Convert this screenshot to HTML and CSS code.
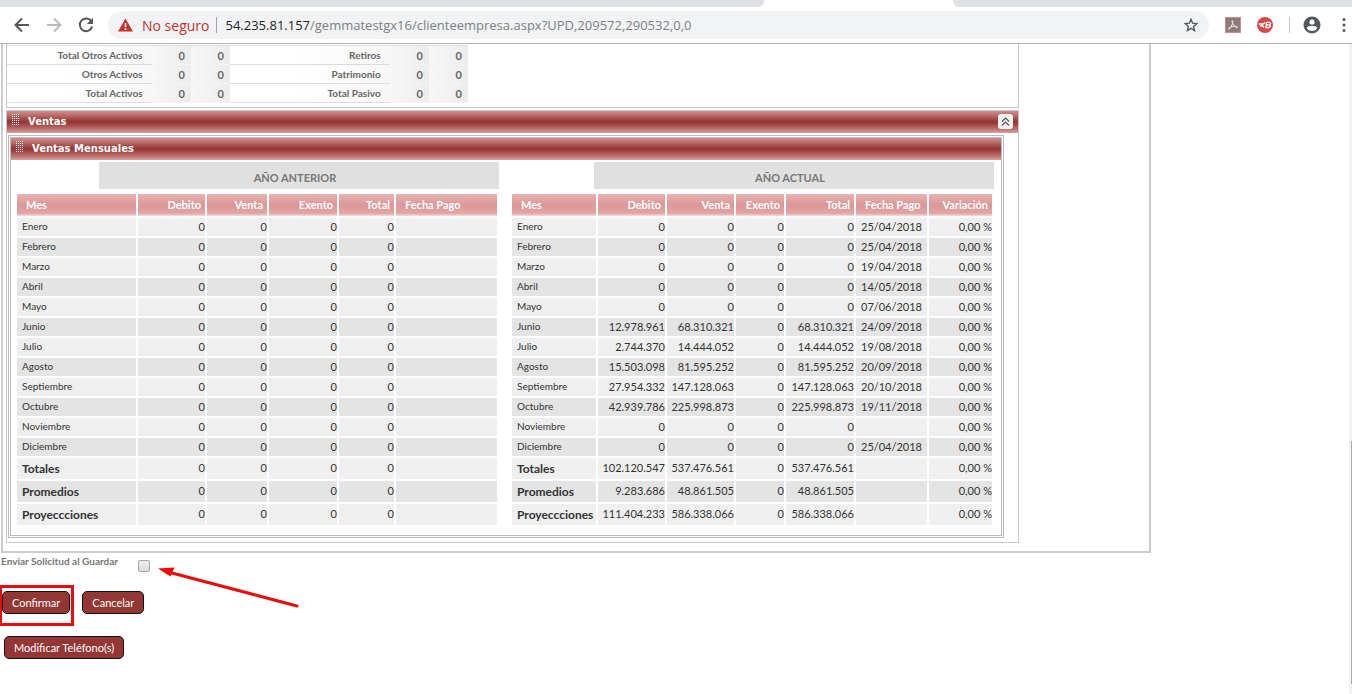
FILE: index.html
```html
<!DOCTYPE html>
<html lang="es">
<head>
<meta charset="utf-8">
<title>Cliente Empresa</title>
<link rel="stylesheet" href="styles.css">
</head>
<body>
<header class="browser">
  <div class="tabstrip"><span class="tab tab-before"></span><span class="tab tab-active"></span><span class="tab tab-after"></span></div>
  <div class="toolbar">
    <button class="nav" aria-label="Atrás"><svg width="16" height="16" viewBox="0 0 16 16"><path d="M15 8H2M8 1.500L1.500 8L8 14.500" fill="none" stroke="#55585c" stroke-width="2"/></svg></button>
    <button class="nav" aria-label="Adelante"><svg width="16" height="16" viewBox="0 0 16 16"><path d="M1 8h13M8 1.500L14.500 8L8 14.500" fill="none" stroke="#b9bbbe" stroke-width="2"/></svg></button>
    <button class="nav" aria-label="Recargar"><svg width="16" height="16" viewBox="0 0 16 16"><path d="M13.500 4.500A6.300 6.300 0 1 0 14.200 9.500" fill="none" stroke="#55585c" stroke-width="2"/><path d="M15 .8V7H8.800z" fill="#55585c"/></svg></button>
    <div class="omnibox">
      <svg width="15" height="14" viewBox="0 0 15 14"><path d="M7.500 .5L15 13.500H0z" fill="#c5332b"/><path d="M6.700 5h1.600v4H6.700zM6.700 10.300h1.600v1.600H6.700z" fill="#fff"/></svg>
      <span class="insecure">No seguro</span>
      <span class="bar"></span>
      <span class="url"><b>54.235.81.157</b>/gemmatestgx16/clienteempresa.aspx?UPD,209572,290532,0,0</span>
      <button class="star" aria-label="Favorito"><svg width="14" height="14" viewBox="0 0 14 14"><path d="M7 1.300l1.600 3.900 4.200.4-3.200 2.800 1 4.100L7 10.300l-3.600 2.200 1-4.100L1.200 5.600l4.200-.4z" fill="none" stroke="#55585c" stroke-width="1.400"/></svg></button>
    </div>
    <div class="extensions">
      <svg width="16" height="16" viewBox="0 0 16 16"><rect x=".5" y=".5" width="15" height="15" fill="#8b7c7b" stroke="#c98d86"/><path d="M7.300 3.500c1 0 .6 2.300-.4 4.500S4.300 12.700 3.400 12.300 5.200 9.800 8 9.300s4.800.4 4.500 1.200-3-.7-4.200-2.900S6.500 3.500 7.300 3.500z" fill="none" stroke="#f4eded" stroke-width=".9"/></svg>
      <svg width="16" height="16" viewBox="0 0 16 16"><circle cx="8" cy="8" r="8" fill="#dc4646"/><path d="M1.500 7h5M3 9h3.500M8 5.500L5 8l2 2.500M9.500 5.300h3.200l1 1-.8 1.500.5 1.400-1.200 1.300H8.800zM9.800 7.800h3" fill="none" stroke="#fff" stroke-width="1.300"/></svg>
      <span class="bar light"></span>
      <svg width="18" height="18" viewBox="0 0 18 18"><circle cx="9" cy="9" r="8.500" fill="#55585c"/><circle cx="9" cy="6" r="2.600" fill="#fff"/><path d="M3.800 12.300c0-3.300 10.400-3.300 10.400 0-1 1.600-2.900 2.700-5.200 2.700s-4.200-1.100-5.200-2.700z" fill="#fff"/></svg>
      <svg class="more" width="4" height="16" viewBox="0 0 4 16"><circle cx="2" cy="2.500" r="1.500" fill="#55585c"/><circle cx="2" cy="8" r="1.500" fill="#55585c"/><circle cx="2" cy="13.500" r="1.500" fill="#55585c"/></svg>
    </div>
  </div>
</header>
<div class="viewport">
<main class="page">
  <div class="frame">
    <div class="stack">
      <section class="box balance">
        <table class="totals">
          <colgroup><col class="w144"><col class="w39"><col class="w39"><col class="w159"><col class="w39"><col class="w39"></colgroup>
          <tbody>
          <tr><th>Total Otros Activos</th><td>0</td><td>0</td><th>Retiros</th><td>0</td><td>0</td></tr>
          <tr><th>Otros Activos</th><td>0</td><td>0</td><th>Patrimonio</th><td>0</td><td>0</td></tr>
          <tr><th>Total Activos</th><td>0</td><td>0</td><th>Total Pasivo</th><td>0</td><td>0</td></tr>
          </tbody>
        </table>
      </section>
      <section class="box">
        <h2 class="title"><span class="grip"></span>Ventas<button class="collapse" aria-label="Contraer"><svg width="9" height="9" viewBox="0 0 9 9"><path d="M1 4.500L4.500 1L8 4.500M1 8.500L4.500 5L8 8.500" fill="none" stroke="#555" stroke-width="1.200"/></svg></button></h2>
        <div class="inner">
          <h3 class="title"><span class="grip"></span>Ventas Mensuales</h3>
          <div class="years">
            <div class="year">
              <h4 class="band">AÑO ANTERIOR</h4>
              <table class="sales">
                <colgroup><col class="w119"><col class="w67"><col class="w60"><col class="w68"><col class="w55"><col class="w101"></colgroup>
                <thead><tr><th>Mes</th><th>Debito</th><th>Venta</th><th>Exento</th><th>Total</th><th class="date">Fecha Pago</th></tr></thead>
                <tbody>
                <tr><th>Enero</th><td>0</td><td>0</td><td>0</td><td>0</td><td></td></tr>
                <tr><th>Febrero</th><td>0</td><td>0</td><td>0</td><td>0</td><td></td></tr>
                <tr><th>Marzo</th><td>0</td><td>0</td><td>0</td><td>0</td><td></td></tr>
                <tr><th>Abril</th><td>0</td><td>0</td><td>0</td><td>0</td><td></td></tr>
                <tr><th>Mayo</th><td>0</td><td>0</td><td>0</td><td>0</td><td></td></tr>
                <tr><th>Junio</th><td>0</td><td>0</td><td>0</td><td>0</td><td></td></tr>
                <tr><th>Julio</th><td>0</td><td>0</td><td>0</td><td>0</td><td></td></tr>
                <tr><th>Agosto</th><td>0</td><td>0</td><td>0</td><td>0</td><td></td></tr>
                <tr><th>Septiembre</th><td>0</td><td>0</td><td>0</td><td>0</td><td></td></tr>
                <tr><th>Octubre</th><td>0</td><td>0</td><td>0</td><td>0</td><td></td></tr>
                <tr><th>Noviembre</th><td>0</td><td>0</td><td>0</td><td>0</td><td></td></tr>
                <tr><th>Diciembre</th><td>0</td><td>0</td><td>0</td><td>0</td><td></td></tr>
                <tr class="sum"><th>Totales</th><td>0</td><td>0</td><td>0</td><td>0</td><td></td></tr>
                <tr class="sum"><th>Promedios</th><td>0</td><td>0</td><td>0</td><td>0</td><td></td></tr>
                <tr class="sum"><th>Proyeccciones</th><td>0</td><td>0</td><td>0</td><td>0</td><td></td></tr>
                </tbody>
              </table>
            </div>
            <div class="year">
              <h4 class="band">AÑO ACTUAL</h4>
              <table class="sales">
                <colgroup><col class="w84"><col class="w67"><col class="w67"><col class="w48"><col class="w68"><col class="w71"><col class="w63"></colgroup>
                <thead><tr><th>Mes</th><th>Debito</th><th>Venta</th><th>Exento</th><th>Total</th><th class="date">Fecha Pago</th><th>Variación</th></tr></thead>
                <tbody>
                <tr><th>Enero</th><td>0</td><td>0</td><td>0</td><td>0</td><td class="date">25/04/2018</td><td>0,00 %</td></tr>
                <tr><th>Febrero</th><td>0</td><td>0</td><td>0</td><td>0</td><td class="date">25/04/2018</td><td>0,00 %</td></tr>
                <tr><th>Marzo</th><td>0</td><td>0</td><td>0</td><td>0</td><td class="date">19/04/2018</td><td>0,00 %</td></tr>
                <tr><th>Abril</th><td>0</td><td>0</td><td>0</td><td>0</td><td class="date">14/05/2018</td><td>0,00 %</td></tr>
                <tr><th>Mayo</th><td>0</td><td>0</td><td>0</td><td>0</td><td class="date">07/06/2018</td><td>0,00 %</td></tr>
                <tr><th>Junio</th><td>12.978.961</td><td>68.310.321</td><td>0</td><td>68.310.321</td><td class="date">24/09/2018</td><td>0,00 %</td></tr>
                <tr><th>Julio</th><td>2.744.370</td><td>14.444.052</td><td>0</td><td>14.444.052</td><td class="date">19/08/2018</td><td>0,00 %</td></tr>
                <tr><th>Agosto</th><td>15.503.098</td><td>81.595.252</td><td>0</td><td>81.595.252</td><td class="date">20/09/2018</td><td>0,00 %</td></tr>
                <tr><th>Septiembre</th><td>27.954.332</td><td>147.128.063</td><td>0</td><td>147.128.063</td><td class="date">20/10/2018</td><td>0,00 %</td></tr>
                <tr><th>Octubre</th><td>42.939.786</td><td>225.998.873</td><td>0</td><td>225.998.873</td><td class="date">19/11/2018</td><td>0,00 %</td></tr>
                <tr><th>Noviembre</th><td>0</td><td>0</td><td>0</td><td>0</td><td></td><td>0,00 %</td></tr>
                <tr><th>Diciembre</th><td>0</td><td>0</td><td>0</td><td>0</td><td class="date">25/04/2018</td><td>0,00 %</td></tr>
                <tr class="sum"><th>Totales</th><td>102.120.547</td><td>537.476.561</td><td>0</td><td>537.476.561</td><td></td><td>0,00 %</td></tr>
                <tr class="sum"><th>Promedios</th><td>9.283.686</td><td>48.861.505</td><td>0</td><td>48.861.505</td><td></td><td>0,00 %</td></tr>
                <tr class="sum"><th>Proyeccciones</th><td>111.404.233</td><td>586.338.066</td><td>0</td><td>586.338.066</td><td></td><td>0,00 %</td></tr>
                </tbody>
              </table>
            </div>
          </div>
        </div>
      </section>
    </div>
  </div>
  <form class="actions">
    <div class="send"><label for="enviar">Enviar Solicitud al Guardar</label><input type="checkbox" id="enviar"></div>
    <svg class="arrow" width="142" height="44" viewBox="0 0 142 44"><path d="M139 40L14 7" stroke="#e80c0c" stroke-width="3" stroke-linecap="round"/><path d="M0 2.500L16.500 1.500L12.500 10.500z" fill="#f00"/></svg>
    <div class="buttons"><span class="marked"><button type="button" class="btn">Confirmar</button></span><button type="button" class="btn">Cancelar</button></div>
    <div class="phones"><button type="button" class="btn">Modificar Teléfono(s)</button></div>
  </form>
</main>
<div class="scrollbar"><span class="thumb"></span></div>
</div>
</body>
</html>
```

FILE: styles.css
```css
* { box-sizing: border-box; }
body {
  margin: 0;
  height: 100vh;
  display: flex;
  flex-direction: column;
  overflow: hidden;
  background: #fff;
  font-family: Lato, "Open Sans", sans-serif;
  font-size: 11px;
  color: #333;
}
button { font: inherit; margin: 0; padding: 0; border: 0; background: none; }
svg { display: block; flex: none; }
h2, h3, h4 { margin: 0; }

/* Browser chrome */
.browser { flex: none; border-bottom: 1px solid #b0b3b2; }
.tabstrip { display: flex; height: 7px; background: #fff; }
.tab { background: #dee1e6; }
.tab-before { flex: 752; border-radius: 0 0 6px 0; }
.tab-before { flex: 764; }
.tab-active { flex: 189; background: #fff; }
.tab-after { flex: 399; border-radius: 0 0 0 6px; }
.toolbar { display: flex; align-items: center; height: 36px; padding: 0 6px 0 14px; }
.nav { width: 16px; height: 16px; margin-right: 16px; flex: none; }
.omnibox {
  flex: 1;
  display: flex;
  align-items: center;
  height: 28px;
  margin-left: -2px;
  padding: 0 11px 0 10px;
  border-radius: 14px;
  background: #f1f3f4;
  font-family: "Open Sans", sans-serif;
  font-size: 13px;
  white-space: nowrap;
}
.insecure { margin-left: 9px; font-size: 14px; color: #c5332b; }
.bar { flex: none; width: 1px; height: 16px; margin: 0 8px 0 7px; background: #a0a3a7; }
.light { margin: 0 -3px 0 0; background: #c4c6ca; }
.url { flex: 1; color: #7c8085; }
.url b { font-weight: 400; color: #222; }
.extensions { display: flex; align-items: center; gap: 16px; margin-left: 16px; }
.more { margin-left: 5px; }

/* Scrolled page */
.viewport { flex: 1; display: flex; min-height: 0; }
.page { flex: 1; min-width: 0; overflow: hidden; }
.scrollbar { width: 3px; background: #f1f1f1; display: flex; flex-direction: column; align-items: flex-end; justify-content: flex-end; padding-bottom: 10px; }
.thumb { width: 1px; height: 38%; background: #aaa; }
.frame { width: 1150px; max-width: 100%; margin-left: 1px; padding: 0 0 8px 3px; border: 2px solid #ccc; border-top: 0; }
.stack { display: flex; flex-direction: column; gap: 2px; width: fit-content; }
.box { border: 1px solid #c9c9c9; padding-bottom: 4px; }
.balance { border-top: 0; padding-top: 1px; }

.totals { table-layout: fixed; width: 461px; border-collapse: collapse; border-top: 1px solid #ddd; color: #666; font-weight: 700; }
.totals tr { height: 19px; }
.totals th, .totals td { padding: 0 6px 0 0; text-align: right; border-bottom: 1px solid #dcdcdc; }
.totals th { padding-right: 9px; font-size: 10px; background: linear-gradient(90deg, #fff 40%, #f7f7f7); }
.totals td { border-bottom-color: #f4f4f4; background: linear-gradient(90deg, #f7f7f7, #ececec); }

.title {
  display: flex;
  align-items: center;
  height: 22px;
  padding: 0 5px 2px 4px;
  background: linear-gradient(#cf8f8f, #be6e6e 18%, #933636 48%, #a04343 60%, #c77f7f 88%, #d9a3a3);
  color: #fff;
  font-family: "DejaVu Sans", sans-serif;
  font-size: 10px;
  font-weight: 700;
}
.grip {
  width: 8px;
  height: 12px;
  margin: 0 9px 2px 0;
  background: conic-gradient(#eee 25%, transparent 0) 0 0 / 2px 2px;
}
.collapse { display: grid; place-items: center; width: 15px; height: 15px; margin-left: auto; border-radius: 3px; background: #f2f2f2; }
.inner { margin: 2px 14px 0 1px; border: 3px double #bbb; }
.years { display: flex; gap: 11px; padding: 2px 7px 8px 4px; }
.band { height: 27px; margin: 0 0 3px 84px; padding: 3px 8px 0 0; background: #e0e0e0; color: #777; font-size: 11px; line-height: 26px; text-align: center; }

.sales { width: 484px; table-layout: fixed; border-spacing: 2px; font-size: 11px; line-height: 16px; white-space: nowrap; }
.sales th, .sales td { padding: 0; height: 18px; text-align: right; }
.sales th:first-child { text-align: left; }
.sales tbody th, .sales tbody td { background: #efefef; }
.sales tbody tr:nth-child(even) > * { background: #e4e4e4; }
.sales tbody th { padding: 0 0 2px 5px; font-size: 10px; font-weight: 400; }
.sales thead th { height: 22px; padding: 0 4px 0 9px; color: #fff; background: linear-gradient(#e6b4b4, #dc9696 50%, #e2a6a6 88%, #f5dede); }
.sales thead .date { text-align: left; padding-right: 0; }
.sales td.date { text-align: left; padding-left: 5px; }
.sales .sum > * { height: 21px; }
.sales .sum th { padding-bottom: 0; font-size: 12px; font-weight: 700; }
.sales .sum td { padding-bottom: 2px; }

.w39 { width: 39px; } .w48 { width: 48px; } .w55 { width: 55px; } .w60 { width: 60px; }
.w63 { width: 63px; } .w67 { width: 67px; } .w68 { width: 68px; } .w71 { width: 71px; }
.w84 { width: 84px; } .w101 { width: 101px; } .w119 { width: 119px; } .w144 { width: 144px; } .w159 { width: 159px; }

/* Form footer */
.actions { position: relative; }
.send { display: flex; align-items: flex-start; padding: 2px 0 0 1px; height: 32px; }
.send label { width: 137px; font-size: 10px; line-height: 13px; font-weight: 700; color: #777; }
.send input { appearance: none; width: 12px; height: 12px; margin: 5px 0 0; border: 1px solid #a5a5a5; border-radius: 2px; background: linear-gradient(#eee, #ddd); }
.arrow { position: absolute; left: 158px; top: 13px; }
.buttons { display: flex; align-items: flex-start; gap: 8px; }
.marked { padding: 3px 1px 9px 0; border: 3px solid #e80c0c; border-left-width: 2px; }
.btn { height: 23px; padding: 0 9px 1px; border: 1px solid #111; border-radius: 5px; background: #943634; color: #fff; font-size: 11px; }
.buttons > .btn { margin-top: 6px; }
.phones { padding: 10px 0 0 4px; }
```
